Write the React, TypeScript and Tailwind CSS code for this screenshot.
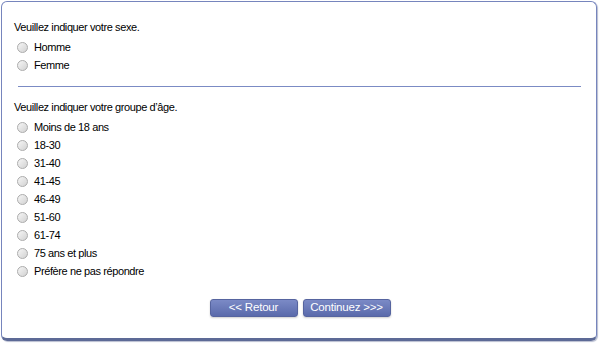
type Question = {
  title: string;
  name: string;
  options: string[];
};

const questions: Question[] = [
  { title: "Veuillez indiquer votre sexe.", name: "sexe", options: ["Homme", "Femme"] },
  {
    title: "Veuillez indiquer votre groupe d’âge.",
    name: "age",
    options: [
      "Moins de 18 ans",
      "18-30",
      "31-40",
      "41-45",
      "46-49",
      "51-60",
      "61-74",
      "75 ans et plus",
      "Préfère ne pas répondre",
    ],
  },
];

function Radio() {
  return (
    <span className="mr-[6px] h-[11px] w-[11px] shrink-0 rounded-full border border-[#acacac] bg-gradient-to-br from-[#f6f6f6] to-[#d2d2d2]" />
  );
}

function QuestionBlock({ question }: { question: Question }) {
  return (
    <div>
      <p className="h-[18px] leading-[18px]">{question.title}</p>
      <div className="mt-[2px] flex flex-col">
        {question.options.map((option) => (
          <label key={option} className="flex h-[18px] items-center pl-[3px]">
            <Radio />
            {option}
          </label>
        ))}
      </div>
    </div>
  );
}

export default function App() {
  return (
    <div className="h-[343px] w-[600px] bg-white p-px font-['Liberation_Sans',Arial,sans-serif] text-[11px] tracking-[-0.4px] text-black">
      <div className="flex h-[340px] w-[596px] flex-col rounded-[6px] border border-b-[3px] border-[#7685bd] border-b-[#5d6a96] px-[12px] pt-[16px] shadow-[1px_1px_1px_#b8bdd0]">
        <QuestionBlock question={questions[0]} />
        <div className="ml-[4px] mt-[12px] h-px w-[563px] bg-[#7b8bc4]" />
        <div className="mt-[11px]">
          <QuestionBlock question={questions[1]} />
        </div>
        <div className="mt-[19px] flex justify-center gap-[5px] pl-[2px]">
          <button className="h-[18px] w-[88px] rounded-[3px] border border-[#56649f] bg-gradient-to-b from-[#7b8ac6] to-[#5a6aab] text-[11.5px] leading-none tracking-[-0.2px] text-white shadow-[0_1px_2px_#cfcfcf]">
            &lt;&lt; Retour
          </button>
          <button className="h-[18px] w-[88px] rounded-[3px] border border-[#56649f] bg-gradient-to-b from-[#7b8ac6] to-[#5a6aab] text-[11.5px] leading-none tracking-[-0.2px] text-white shadow-[0_1px_2px_#cfcfcf]">
            Continuez &gt;&gt;&gt;
          </button>
        </div>
      </div>
    </div>
  );
}
